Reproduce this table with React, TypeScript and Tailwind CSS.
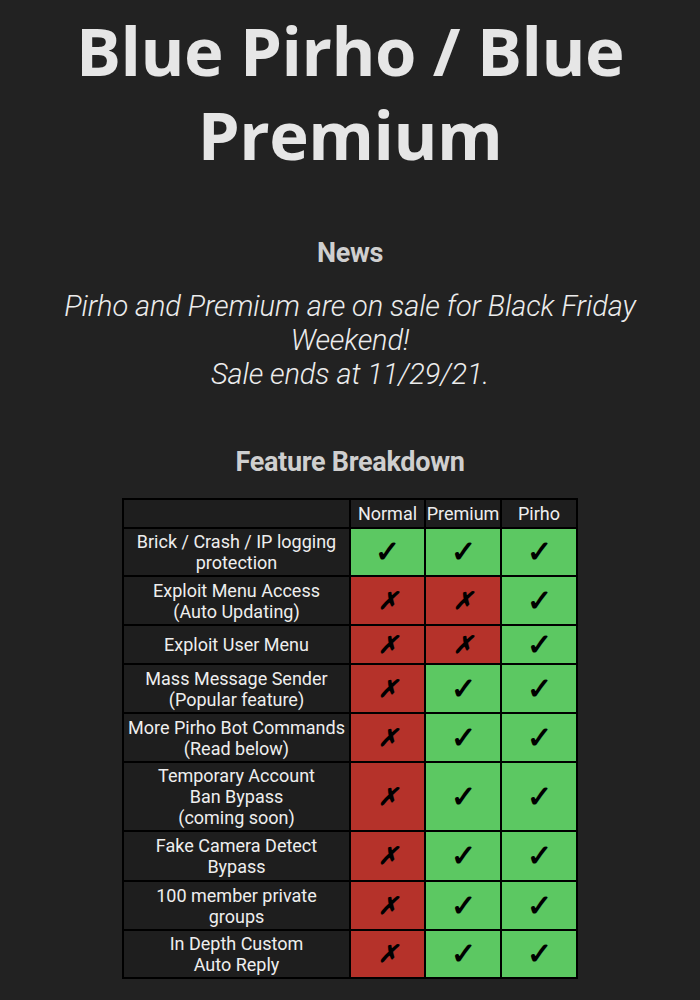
import React from "react";

type Row = { label: string[]; v: [boolean, boolean, boolean]; h: string };

const rows: Row[] = [
  { label: ["Brick / Crash / IP logging", "protection"], v: [true, true, true], h: "h-[48px]" },
  { label: ["Exploit Menu Access", "(Auto Updating)"], v: [false, false, true], h: "h-[49px]" },
  { label: ["Exploit User Menu"], v: [false, false, true], h: "h-[39px]" },
  { label: ["Mass Message Sender", "(Popular feature)"], v: [false, true, true], h: "h-[49px]" },
  { label: ["More Pirho Bot Commands", "(Read below)"], v: [false, true, true], h: "h-[49px]" },
  { label: ["Temporary Account", "Ban Bypass", "(coming soon)"], v: [false, true, true], h: "h-[69px]" },
  { label: ["Fake Camera Detect", "Bypass"], v: [false, true, true], h: "h-[50px]" },
  { label: ["100 member private", "groups"], v: [false, true, true], h: "h-[49px]" },
  { label: ["In Depth Custom", "Auto Reply"], v: [false, true, true], h: "h-[48px]" },
];

function Mark({ ok }: { ok: boolean }) {
  return ok ? (
    <span className="text-[30px] font-bold leading-none text-black">✓</span>
  ) : (
    <span className="text-[24px] font-bold leading-none text-black italic">✗</span>
  );
}

export default function App() {
  return (
    <div className="min-h-[1000px] w-[700px] bg-[#222222] text-center font-['Roboto',sans-serif]">
      <h1 className="pt-[8px] font-['Open_Sans',sans-serif] text-[67px] font-bold leading-[84px] text-[#e6e6e6] tracking-[-0.5px]">
        Blue Pirho / Blue
        <br />
        Premium
      </h1>
      <h2 className="mt-[61px] text-[27px] font-bold leading-[32px] text-[#cfcfcf] tracking-[-0.3px]">News</h2>
      <p className="mt-[20px] text-[29px] font-light italic leading-[34px] text-[#ececec] tracking-[-0.1px]">
        Pirho and Premium are on sale for Black Friday
        <br />
        Weekend!
        <br />
        Sale ends at 11/29/21.
      </p>
      <h2 className="mt-[55px] text-[27px] font-bold leading-[32px] text-[#cfcfcf] tracking-[-0.3px]">
        Feature Breakdown
      </h2>
      <div className="mt-[20px] flex justify-center">
        <table className="border-collapse border-2 border-black text-[18px] leading-[21px] text-[#eeeeee]">
          <thead>
            <tr className="h-[29px]">
              <th className="w-[227px] border-2 border-black bg-[#1e1e1e]"></th>
              <th className="w-[75px] border-2 border-black bg-[#1e1e1e] font-normal">Normal</th>
              <th className="w-[76px] border-2 border-black bg-[#1e1e1e] font-normal">Premium</th>
              <th className="w-[76px] border-2 border-black bg-[#1e1e1e] font-normal">Pirho</th>
            </tr>
          </thead>
          <tbody>
            {rows.map((r, i) => (
              <tr key={i} className={r.h}>
                <td className="border-2 border-black bg-[#1e1e1e] px-0">
                  {r.label.map((l, j) => (
                    <div key={j}>{l}</div>
                  ))}
                </td>
                {r.v.map((ok, j) => (
                  <td
                    key={j}
                    className={`border-2 border-black ${ok ? "bg-[#5cc862]" : "bg-[#b5322a]"}`}
                  >
                    <Mark ok={ok} />
                  </td>
                ))}
              </tr>
            ))}
          </tbody>
        </table>
      </div>
    </div>
  );
}
